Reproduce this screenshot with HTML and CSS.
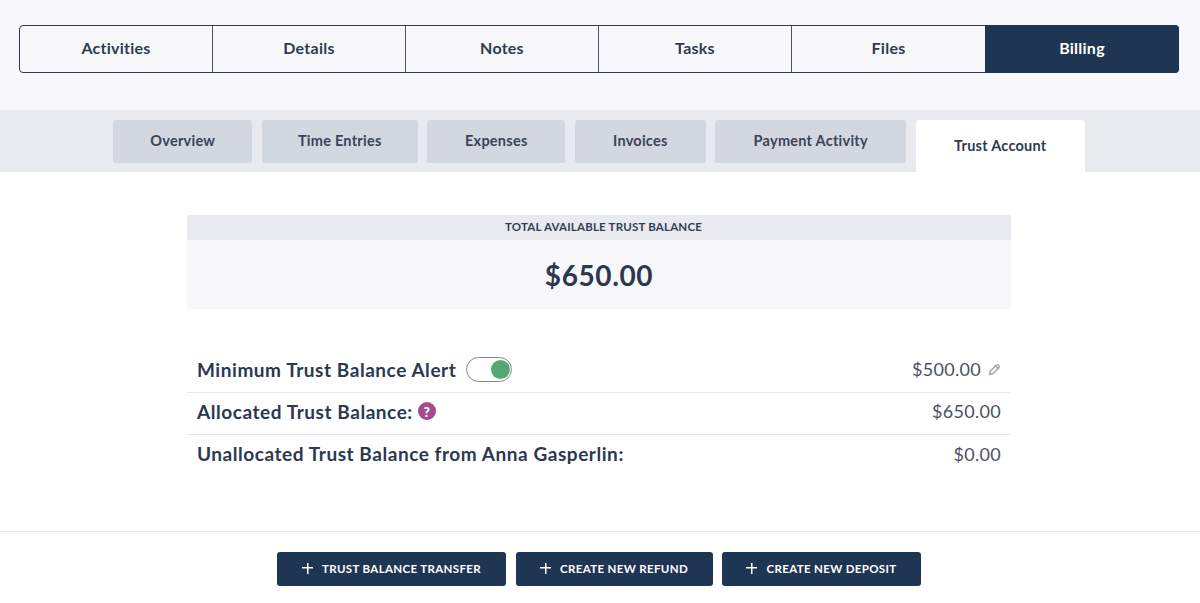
FILE: index.html
```html
<!DOCTYPE html>
<html lang="en">
  <head>
    <meta charset="UTF-8" />
    <meta name="viewport" content="width=device-width, initial-scale=1.0" />
    <title>Billing - Trust Account</title>
    <link rel="stylesheet" href="styles.css">
  </head>
  <body>
    <header class="top-section">
      <nav class="main-tabs">
        <a class="main-tab">Activities</a>
        <a class="main-tab">Details</a>
        <a class="main-tab">Notes</a>
        <a class="main-tab">Tasks</a>
        <a class="main-tab">Files</a>
        <a class="main-tab active">Billing</a>
      </nav>
    </header>

    <nav class="sub-tabs">
      <a class="sub-tab">Overview</a>
      <a class="sub-tab">Time Entries</a>
      <a class="sub-tab">Expenses</a>
      <a class="sub-tab">Invoices</a>
      <a class="sub-tab">Payment Activity</a>
      <a class="sub-tab active">Trust Account</a>
    </nav>

    <main class="content">
      <section class="balance-card">
        <h2 class="balance-title">TOTAL AVAILABLE TRUST BALANCE</h2>
        <p class="balance-amount">$650.00</p>
      </section>

      <section class="rows">
        <div class="row">
          <div class="row-label">
            Minimum Trust Balance Alert
            <span class="toggle"><span class="knob"></span></span>
          </div>
          <div class="row-value">
            $500.00
            <svg class="pencil" width="13" height="13" viewBox="0 0 14 14" fill="none" stroke="#a3a5a9" stroke-width="1.5" stroke-linejoin="round">
              <path d="M1.6 12.4l.8-3.6 6.6-6.6a1.3 1.3 0 0 1 1.8 0l1 1a1.3 1.3 0 0 1 0 1.8l-6.6 6.6z" />
              <path d="M8.1 3.1l2.8 2.8" />
            </svg>
          </div>
        </div>
        <div class="row">
          <div class="row-label">
            Allocated Trust Balance:
            <span class="help">?</span>
          </div>
          <div class="row-value">$650.00</div>
        </div>
        <div class="row">
          <div class="row-label">Unallocated Trust Balance from Anna Gasperlin:</div>
          <div class="row-value">$0.00</div>
        </div>
      </section>
    </main>

    <footer class="actions">
      <button class="action-btn btn-transfer"><span class="plus"></span>TRUST BALANCE TRANSFER</button>
      <button class="action-btn btn-refund"><span class="plus"></span>CREATE NEW REFUND</button>
      <button class="action-btn btn-deposit"><span class="plus"></span>CREATE NEW DEPOSIT</button>
    </footer>
  </body>
</html>
```

FILE: styles.css
```css
html, body {
  height: 100%;
}

body {
  margin: 0;
  font-family: Lato, "Liberation Sans", sans-serif;
  background-color: white;
  color: #2b3850;
  overflow: hidden;
}

.top-section {
  background-color: #f7f7fc;
  padding: 25px 21px 37px 19px;
}

.main-tabs {
  display: grid;
  grid-template-columns: repeat(6, 1fr);
  height: 48px;
  box-sizing: border-box;
  border: 1px solid #2c3a52;
  border-radius: 4px;
}

.main-tab {
  display: flex;
  align-items: center;
  justify-content: center;
  padding-bottom: 4px;
  font-size: 16px;
  font-weight: 700;
  letter-spacing: 0.25px;
  color: #2f3b50;
  border-right: 1px solid #4a5365;
}

.main-tab:nth-child(5) {
  border-right: none;
}

.main-tab.active {
  margin: -1px -1px -1px 0;
  background-color: #1f3554;
  color: white;
  border: none;
  border-radius: 0 4px 4px 0;
}

.sub-tabs {
  display: flex;
  justify-content: center;
  gap: 9.5px;
  height: 62px;
  box-sizing: border-box;
  padding: 10px 2px 0 0;
  background-color: #e8eaef;
}

.sub-tab {
  display: flex;
  align-items: center;
  justify-content: center;
  height: 43px;
  box-sizing: border-box;
  padding-bottom: 2px;
  font-size: 14.5px;
  font-weight: 700;
  letter-spacing: 0.25px;
  color: #3a4458;
  background-color: #d3d7e0;
  border-radius: 3px;
  width: 139px;
}

.sub-tab:nth-child(2) { width: 156px; }
.sub-tab:nth-child(3) { width: 138px; }
.sub-tab:nth-child(4) { width: 131px; }
.sub-tab:nth-child(5) { width: 191px; }

.sub-tab.active {
  width: 169px;
  height: 52px;
  padding-bottom: 2px;
  background-color: white;
  color: #2f3b50;
  border-radius: 3px 3px 0 0;
}

.content {
  width: 824px;
  height: 359px;
  box-sizing: border-box;
  margin: 0 0 0 187px;
  padding-top: 43px;
}

.balance-card {
  background-color: #f8f8fc;
  border-radius: 3px;
  height: 94px;
  text-align: center;
}

.balance-title {
  margin: 0;
  height: 25px;
  padding-left: 9px;
  line-height: 24px;
  font-size: 11.5px;
  font-weight: 700;
  letter-spacing: 0.2px;
  color: #343f54;
  background-color: #e8eaef;
  border-radius: 3px 3px 0 0;
}

.balance-amount {
  margin: 0;
  height: 69px;
  line-height: 70px;
  font-size: 28px;
  font-weight: 700;
  letter-spacing: 0.6px;
  color: #2b3850;
}

.rows {
  margin-top: 42px;
}

.row {
  display: flex;
  align-items: center;
  justify-content: space-between;
  height: 42px;
  padding: 0 10px 5px;
  border-bottom: 1px solid #e8e9ee;
  box-sizing: border-box;
}

.row:last-child {
  border-bottom: none;
}

.row-label {
  display: flex;
  align-items: center;
  gap: 5px;
  font-size: 19px;
  font-weight: 700;
  letter-spacing: 0.55px;
  color: #2b3850;
}

.row-value {
  display: flex;
  align-items: center;
  gap: 7px;
  font-size: 18px;
  letter-spacing: 0.3px;
  color: #4a5262;
}

.toggle {
  display: flex;
  align-items: center;
  justify-content: flex-end;
  width: 46px;
  height: 25px;
  margin-left: 5px;
  padding: 0 1px;
  box-sizing: border-box;
  border: 1.5px solid #85888f;
  border-radius: 13px;
  background-color: white;
}

.knob {
  width: 19px;
  height: 19px;
  border-radius: 50%;
  background-color: #54a873;
}

.help {
  display: flex;
  align-items: center;
  justify-content: center;
  width: 18px;
  height: 18px;
  border-radius: 50%;
  background-color: #a4488f;
  color: white;
  font-size: 14px;
  font-weight: 900;
  letter-spacing: 0;
}

.actions {
  display: flex;
  justify-content: center;
  gap: 9.5px;
  height: 72px;
  box-sizing: border-box;
  padding: 20px 2px 0 0;
  border-top: 1px solid #e3e4e8;
  background-color: white;
}

.action-btn {
  display: flex;
  align-items: center;
  justify-content: center;
  gap: 9px;
  height: 34px;
  padding: 0 0 2px;
  border: none;
  border-radius: 3px;
  background-color: #1f3554;
  color: white;
  font-family: inherit;
  font-size: 11.5px;
  font-weight: 700;
  letter-spacing: 0.35px;
}

.btn-transfer { width: 229px; }
.btn-refund { width: 197px; }
.btn-deposit { width: 199px; }

.plus {
  width: 11px;
  height: 11px;
  background:
    linear-gradient(white, white) center / 100% 1.5px no-repeat,
    linear-gradient(white, white) center / 1.5px 100% no-repeat;
}
```
